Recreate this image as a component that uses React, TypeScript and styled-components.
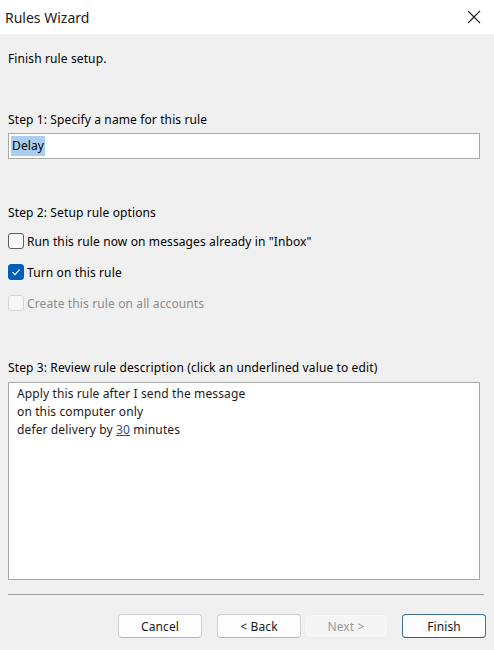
import styled, { createGlobalStyle } from "styled-components";

const Global = createGlobalStyle`
  html, body { margin: 0; padding: 0; background: #f0f0f0; }
  body {
    font-family: "Noto Sans", "Liberation Sans", sans-serif;
    font-size: 12px;
    letter-spacing: 0.12px;
    color: #000;
  }
`;

const Window = styled.div`
  width: 494px;
  height: 650px;
  display: flex;
  flex-direction: column;
  background: #f0f0f0;
  overflow: hidden;
`;

const TitleBar = styled.div`
  height: 34px;
  background: #fff;
  display: flex;
  align-items: center;
  justify-content: space-between;
  padding: 0 8px 0 5px;
  flex-shrink: 0;
`;

const TitleText = styled.div`
  font-size: 14px;
  letter-spacing: 0;
  color: #1a1a1a;
`;

const CloseButton = styled.div`
  width: 20px;
  height: 20px;
  display: flex;
  align-items: center;
  justify-content: center;
  margin-right: 2px;
`;

const Body = styled.div`
  flex: 1;
  display: flex;
  flex-direction: column;
  padding: 0 14px 0 8px;
`;

const Text = styled.div<{ $top: number; $muted?: boolean }>`
  margin-top: ${(p) => p.$top}px;
  line-height: 16px;
  height: 16px;
  color: ${(p) => (p.$muted ? "#8c8c8c" : "#000")};
  white-space: nowrap;
`;

const NameBox = styled.div`
  margin-top: 5px;
  width: 472px;
  height: 26px;
  box-sizing: border-box;
  border: 1px solid #a9a9a9;
  background: #fff;
  display: flex;
  align-items: center;
  padding-left: 2px;
`;

const Selected = styled.span`
  background: #a8cdf0;
  line-height: 20px;
  padding: 0 1px;
`;

const CheckRow = styled.div<{ $top: number; $disabled?: boolean }>`
  margin-top: ${(p) => p.$top}px;
  height: 16px;
  display: flex;
  align-items: center;
  gap: 3px;
  white-space: nowrap;
  color: ${(p) => (p.$disabled ? "#8c8c8c" : "#000")};
`;

const Box = styled.div<{ $checked?: boolean; $disabled?: boolean }>`
  width: 16px;
  height: 16px;
  box-sizing: border-box;
  border-radius: 3px;
  border: 1px solid
    ${(p) => (p.$checked ? "#005fb8" : p.$disabled ? "#d4d4d4" : "#5e5e5e")};
  background: ${(p) => (p.$checked ? "#005fb8" : p.$disabled ? "#f7f7f7" : "#fbfbfb")};
  display: flex;
  align-items: center;
  justify-content: center;
  flex-shrink: 0;
`;

const Description = styled.div`
  margin-top: 6px;
  width: 472px;
  height: 198px;
  box-sizing: border-box;
  border: 1px solid #a9a9a9;
  background: #fff;
  padding: 2px 0 0 8px;
`;

const DescLine = styled.div`
  line-height: 18px;
  height: 18px;
  color: #1a1a1a;
`;

const Link = styled.span`
  color: #1f4e9a;
  text-decoration: underline;
`;

const Separator = styled.div`
  margin-top: 14px;
  width: 476px;
  height: 1px;
  background: #a0a0a0;
`;

const ButtonRow = styled.div`
  margin-top: 19px;
  display: flex;
  justify-content: flex-end;
  margin-right: -6px;
`;

const Button = styled.div<{ $primary?: boolean; $disabled?: boolean; $gap: number }>`
  width: 84px;
  height: 24px;
  box-sizing: border-box;
  margin-left: ${(p) => p.$gap}px;
  border-radius: 4px;
  border: 1px solid
    ${(p) => (p.$primary ? "#3f6f92" : p.$disabled ? "#eeeeee" : "#d0d0d0")};
  border-bottom-color: ${(p) => (p.$primary ? "#2f5f84" : p.$disabled ? "#eeeeee" : "#b5b5b5")};
  background: ${(p) => (p.$disabled ? "#f5f5f5" : "#fdfdfd")};
  color: ${(p) => (p.$disabled ? "#9a9a9a" : "#1a1a1a")};
  display: flex;
  align-items: center;
  justify-content: center;
`;

export default function App() {
  return (
    <Window>
      <Global />
      <TitleBar>
        <TitleText>Rules Wizard</TitleText>
        <CloseButton>
          <svg width="14" height="14" viewBox="0 0 14 14">
            <path d="M1 1 L13 13 M13 1 L1 13" stroke="#1a1a1a" strokeWidth="1.1" />
          </svg>
        </CloseButton>
      </TitleBar>
      <Body>
        <Text $top={17}>Finish rule setup.</Text>
        <Text $top={45}>Step 1: Specify a name for this rule</Text>
        <NameBox>
          <Selected>Delay</Selected>
        </NameBox>
        <Text $top={46}>Step 2: Setup rule options</Text>
        <CheckRow $top={12}>
          <Box />
          Run this rule now on messages already in "Inbox"
        </CheckRow>
        <CheckRow $top={15}>
          <Box $checked>
            <svg width="10" height="10" viewBox="0 0 10 10">
              <path d="M1.5 5.2 L4 7.6 L8.6 2.6" stroke="#fff" strokeWidth="1.1" fill="none" />
            </svg>
          </Box>
          Turn on this rule
        </CheckRow>
        <CheckRow $top={15} $disabled>
          <Box $disabled />
          Create this rule on all accounts
        </CheckRow>
        <Text $top={49}>Step 3: Review rule description (click an underlined value to edit)</Text>
        <Description>
          <DescLine>Apply this rule after I send the message</DescLine>
          <DescLine>on this computer only</DescLine>
          <DescLine>
            defer delivery by <Link>30</Link> minutes
          </DescLine>
        </Description>
        <Separator />
        <ButtonRow>
          <Button $gap={0}>Cancel</Button>
          <Button $gap={15}>&lt; Back</Button>
          <Button $gap={3} $disabled>Next &gt;</Button>
          <Button $gap={14} $primary>Finish</Button>
        </ButtonRow>
      </Body>
    </Window>
  );
}
